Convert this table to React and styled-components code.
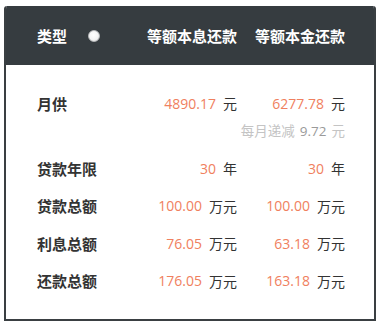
import React from 'react';
import styled, { createGlobalStyle } from 'styled-components';

const GlobalStyle = createGlobalStyle`
   html, body {
      margin: 0;
      padding: 0;
      background: #fff;
   }
   body {
      font-family: 'Open Sans', 'Noto Sans CJK SC', sans-serif;
      color: #333;
   }
`;

const rows = [
   { label: '月供', a: '4890.17', b: '6277.78', unit: '元', note: { text: '每月递减', value: '9.72', unit: '元' } },
   { label: '贷款年限', a: '30', b: '30', unit: '年' },
   { label: '贷款总额', a: '100.00', b: '100.00', unit: '万元' },
   { label: '利息总额', a: '76.05', b: '63.18', unit: '万元' },
   { label: '还款总额', a: '176.05', b: '163.18', unit: '万元' },
];

const Card = styled.div`
   margin: 6px 0 0 4px;
   width: 372px;
   height: 315px;
   box-sizing: border-box;
   border: 2px solid #3a3f42;
   border-top: none;
   border-radius: 3px 3px 0 0;
   overflow: hidden;
`;

const Grid = styled.div`
   display: grid;
   grid-template-columns: 92px 108px 108px;
   padding: 0 29px 0 31px;
`;

const Header = styled(Grid)`
   height: 59px;
   margin: 0 -2px;
   padding: 0 31px 0 33px;
   align-items: center;
   background: #363c40;
   color: #fff;
   font-size: 15px;
   font-weight: 700;
`;

const HeadCell = styled.div`
   display: flex;
   align-items: center;
   justify-content: ${(p) => (p.left ? 'flex-start' : 'flex-end')};
   gap: 21px;
   white-space: nowrap;
   line-height: 20px;
`;

const Radio = styled.span`
   width: 12px;
   height: 12px;
   box-sizing: border-box;
   border-radius: 50%;
   border: 1px solid #b8babc;
   background: radial-gradient(circle at 45% 40%, #fff 0%, #f4f4f4 55%, #d6d6d6 100%);
`;

const Body = styled(Grid)`
   padding-top: 19px;
`;

const Label = styled.div`
   height: ${(p) => p.h}px;
   display: flex;
   align-items: center;
   font-size: 15px;
   font-weight: 700;
   color: #333;
   white-space: nowrap;
`;

const Value = styled.div`
   height: ${(p) => p.h}px;
   display: flex;
   align-items: center;
   justify-content: flex-end;
   gap: 7px;
   white-space: nowrap;
`;

const Num = styled.span`
   font-size: 14px;
   color: #f0805e;
`;

const Unit = styled.span`
   font-size: 14px;
   color: #333;
`;

const Note = styled.div`
   grid-column: 1 / span 3;
   height: 27.5px;
   display: flex;
   justify-content: flex-end;
   align-items: flex-start;
   gap: 5px;
   font-size: 13.5px;
   line-height: 18px;
   color: #c4c4c4;
   white-space: nowrap;
`;

const NoteValue = styled.span`
   color: #9a9a9a;
`;

const App = () => (
   <>
      <GlobalStyle />
      <Card>
         <Header>
            <HeadCell left>
               类型
               <Radio />
            </HeadCell>
            <HeadCell>等额本息还款</HeadCell>
            <HeadCell>等额本金还款</HeadCell>
         </Header>
         <Body>
            {rows.map((r, i) => {
               const h = i === 0 ? 38 : 37.5;
               return (
                  <React.Fragment key={r.label}>
                     <Label h={h}>{r.label}</Label>
                     <Value h={h}>
                        <Num>{r.a}</Num>
                        <Unit>{r.unit}</Unit>
                     </Value>
                     <Value h={h}>
                        <Num>{r.b}</Num>
                        <Unit>{r.unit}</Unit>
                     </Value>
                     {r.note && (
                        <Note>
                           {r.note.text}
                           <NoteValue>{r.note.value}</NoteValue>
                           {r.note.unit}
                        </Note>
                     )}
                  </React.Fragment>
               );
            })}
         </Body>
      </Card>
   </>
);

export default App;
